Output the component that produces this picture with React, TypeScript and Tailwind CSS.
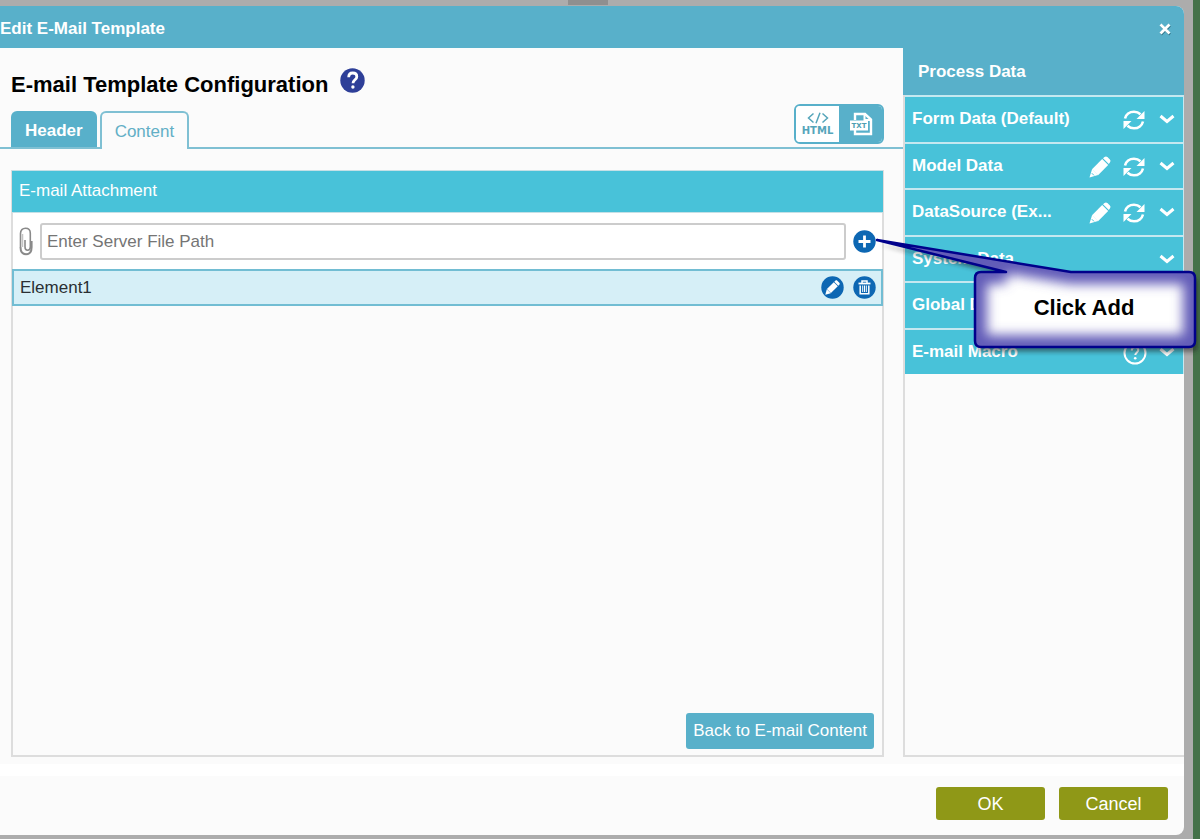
import React from 'react';

type IconProps = { className?: string };

const RefreshIcon = ({ className }: IconProps) => (
  <svg viewBox="0 0 22 20" width="22" height="20" className={className} aria-hidden="true">
    <path d="M2 8.5C3 4.5 6.500 1.700 11 1.700c2.600 0 4.800 1 6.500 2.600" fill="none" stroke="currentColor" strokeWidth="2.600" />
    <path d="M20 11.500c-1 4-4.500 6.800-9 6.800-2.600 0-4.800-1-6.500-2.600" fill="none" stroke="currentColor" strokeWidth="2.600" />
    <path d="M21.500 1v8h-8z" fill="currentColor" />
    <path d="M.5 19v-8h8z" fill="currentColor" />
  </svg>
);

const PencilIcon = ({ className }: IconProps) => (
  <svg viewBox="0 0 22 22" width="22" height="22" className={className} aria-hidden="true">
    <path d="M.5 21.500l2.600-8.500 6 6z" fill="currentColor" />
    <path d="M3 13.200L13.200 3l6 6L9 19.200z" fill="currentColor" />
    <path d="M14 2.200L15.500 1c1-.8 2-.7 2.900.1l2.500 2.500c.8.900.8 1.900 0 2.800l-1.100 1.600z" fill="currentColor" />
    <path d="M2.800 17.200l2.200 2.200" stroke="#48c2d9" strokeWidth="1" />
  </svg>
);

const ChevronIcon = () => (
  <svg viewBox="0 0 16 10" width="16" height="10" aria-hidden="true">
    <path d="M1.500 2L8 7.500 14.500 2" fill="none" stroke="currentColor" strokeWidth="3" />
  </svg>
);

const MacroHelpIcon = () => (
  <svg viewBox="0 0 24 24" width="24" height="24" aria-hidden="true">
    <circle cx="12" cy="12" r="10.500" fill="none" stroke="currentColor" strokeWidth="2" />
    <path d="M8.800 9.500c0-2 1.400-3.200 3.300-3.200s3.200 1.100 3.200 2.800c0 2.300-3 2.600-3 5" fill="none" stroke="currentColor" strokeWidth="2" />
    <circle cx="12.200" cy="17.300" r="1.300" fill="currentColor" />
  </svg>
);

const HelpIcon = () => (
  <svg viewBox="0 0 25 25" width="25" height="25" aria-hidden="true">
    <circle cx="12.500" cy="12.500" r="12.200" fill="#2e3f98" />
    <path d="M8.700 9.200c0-2.600 1.600-4.200 4-4.200s4.100 1.400 4.100 3.700c0 3-3.800 3.300-3.800 6.600" fill="none" stroke="#fff" strokeWidth="2.800" />
    <circle cx="12.900" cy="19" r="1.700" fill="#fff" />
  </svg>
);

const ClipIcon = () => (
  <svg viewBox="0 0 14 29" width="14" height="29" fill="none" aria-hidden="true">
    <path
      d="M1.500 20V6.500C1.500 3 3.500 1.300 6.500 1.300s4.800 1.900 4.800 5V20c0 2-1 3.200-2.700 3.200S6 22 6 20V13"
      stroke="#8a8a8a"
      strokeWidth="1.600"
    />
    <path d="M1.500 20c0 4.500 2 7.200 5.500 7.200s5.600-2.700 5.600-7V14" stroke="#8a8a8a" strokeWidth="2" />
    <path d="M3.500 20V7" stroke="#c4c4c4" strokeWidth="1.500" />
  </svg>
);

const AddIcon = () => (
  <svg viewBox="0 0 23 23" width="23" height="23" aria-hidden="true">
    <circle cx="11.500" cy="11.500" r="11.200" fill="#0d67b3" />
    <path d="M11.500 5.500v12M5.500 11.500h12" stroke="#fff" strokeWidth="2.800" />
  </svg>
);

const EditIcon = () => (
  <svg viewBox="0 0 23 23" width="23" height="23" aria-hidden="true">
    <circle cx="11.500" cy="11.500" r="11.200" fill="#0d67b3" />
    <path d="M4.300 18.700l1.500-5.500 4 4z" fill="#fff" />
    <path d="M5.900 13.100l6.900-6.900 4 4-6.900 6.900z" fill="#fff" />
    <path d="M13.300 5.700l1-1c.7-.6 1.400-.6 2 0l2 2c.6.600.6 1.300 0 2l-1 1z" fill="#fff" />
  </svg>
);

const TrashIcon = () => (
  <svg viewBox="0 0 23 23" width="23" height="23" fill="none" stroke="#fff" aria-hidden="true">
    <circle cx="11.500" cy="11.500" r="11.200" fill="#0d67b3" stroke="none" />
    <path d="M5.500 7.500h12" strokeWidth="1.800" />
    <path d="M9 7V5h5v2" strokeWidth="1.500" />
    <path d="M7.200 9.500v8.300h8.600V9.500" strokeWidth="1.500" />
    <path d="M9.700 9.500v6.500M11.500 9.500v6.500M13.300 9.500v6.500" strokeWidth="1" />
  </svg>
);

const CodeIcon = () => (
  <svg viewBox="0 0 22 12" width="22" height="12" fill="none" stroke="currentColor" strokeWidth="1.500" aria-hidden="true">
    <path d="M6.500 1.500L1.500 6l5 4.500M15.500 1.500l5 4.500-5 4.500M13 .8L9 11.200" />
  </svg>
);

const TxtIcon = () => (
  <svg viewBox="0 0 24 24" width="24" height="24" aria-hidden="true">
    <path d="M6 8V2h10l6 5.500V22H6v-4" fill="none" stroke="#fff" strokeWidth="2.400" />
    <path d="M15.500 1.500v6.500h6.500" fill="none" stroke="#fff" strokeWidth="2" />
    <rect x="1" y="8.500" width="18" height="10" fill="#fff" />
    <text x="10" y="16.200" textAnchor="middle" fontSize="7" className="fill-[#4f9fb3] font-['DejaVu_Sans',sans-serif] font-bold">
      TXT
    </text>
  </svg>
);

const sections = [
  { name: 'Form Data (Default)', refresh: true },
  { name: 'Model Data', edit: true, refresh: true },
  { name: 'DataSource (Ex...', edit: true, refresh: true },
  { name: 'System Data' },
  { name: 'Global Data' },
  { name: 'E-mail Macro', help: true },
];

const Sidebar = () => {
  return (
    <aside className="flex w-[281px] shrink-0 flex-col pb-[7px]">
      <h2 className="h-[47px] bg-[#58b0ca] px-[15px] pt-[13px] font-bold text-white">Process Data</h2>
      <div className="flex flex-1 flex-col border-b-2 border-l-2 border-[#ddd]">
        <ul className="grid min-h-[279px] auto-rows-fr border-r border-[#c5e8f0] text-white">
          {sections.map((s) => (
            <li key={s.name} className="flex items-center border-t-2 border-[#c5e8f0] bg-[#48c2d9] pt-[2px] pr-2 pl-[7px]">
              <span className="flex-1 pb-[2px] font-bold">{s.name}</span>
              {s.edit && (
                <button type="button" aria-label={`Edit ${s.name}`} className="mr-3">
                  <PencilIcon />
                </button>
              )}
              {s.refresh && (
                <button type="button" aria-label={`Refresh ${s.name}`} className="mr-[14px]">
                  <RefreshIcon />
                </button>
              )}
              {s.help && (
                <button type="button" aria-label="Macro help" className="mr-3">
                  <MacroHelpIcon />
                </button>
              )}
              <button type="button" aria-label={`Expand ${s.name}`} className="pb-[2px]">
                <ChevronIcon />
              </button>
            </li>
          ))}
        </ul>
      </div>
    </aside>
  );
};

const Tabs = () => {
  return (
    <div className="flex h-[45px] items-end border-b-2 border-[#7fc0d3] pl-[11px]">
      <div role="tablist" className="flex items-end gap-[3px]">
        <button type="button" role="tab" aria-selected="false" className="h-9 rounded-t-md bg-[#58b0ca] px-[14px] pt-[3px] font-bold text-white">
          Header
        </button>
        <button
          type="button"
          role="tab"
          aria-selected="true"
          className="-mb-[2px] h-[38px] rounded-t-md border-2 border-b-0 border-[#7fc0d3] bg-[#fbfbfb] px-[13px] pt-[2px] text-[#62afc6]"
        >
          Content
        </button>
      </div>
      <div className="mr-[19px] mb-[3px] ml-auto flex h-10 w-[90px] overflow-hidden rounded-md border-2 border-[#58b0ca]">
        <button type="button" className="flex flex-1 flex-col items-center justify-center gap-[2px] bg-white text-[#55a5ba]">
          <CodeIcon />
          <span className="font-['DejaVu_Sans',sans-serif] text-[10px] leading-[10px] font-bold">HTML</span>
        </button>
        <button type="button" aria-label="Plain text" className="flex flex-1 items-center justify-center bg-[#58b0ca]">
          <TxtIcon />
        </button>
      </div>
    </div>
  );
};

const Attachments = () => {
  return (
    <section className="mt-[21px] mr-[19px] mb-[7px] ml-[11px] flex flex-1 flex-col border-2 border-t-0 border-[#ddd]">
      <h2 className="-mx-px h-[43px] border-y border-[#c5e0e6] bg-[#48c2d9] px-[7px] pt-[9px] text-white">E-mail Attachment</h2>
      <div className="flex h-14 items-center bg-white px-[6px]">
        <ClipIcon />
        <input
          type="text"
          aria-label="Server file path"
          placeholder="Enter Server File Path"
          className="mx-[7px] h-[37px] min-w-0 flex-1 rounded-[3px] border-2 border-[#ccc] bg-white px-[5px] pt-[2px] placeholder:text-[#757575]"
        />
        <button type="button" aria-label="Add">
          <AddIcon />
        </button>
      </div>
      <div className="-mx-px flex h-[37px] items-center border-2 border-[#72bdd3] bg-[#d6eff7] pr-[5px] pl-[6px] text-[#2b2f33]">
        <span className="flex-1">Element1</span>
        <button type="button" aria-label="Edit Element1" className="mr-[9px]">
          <EditIcon />
        </button>
        <button type="button" aria-label="Delete Element1">
          <TrashIcon />
        </button>
      </div>
      <div className="mt-auto flex justify-end px-2 pb-[6px]">
        <button type="button" className="h-9 rounded-[3px] bg-[#58b0ca] px-[7px] text-white">
          Back to E-mail Content
        </button>
      </div>
    </section>
  );
};

const calloutShape =
  'M7 10L201 42H319Q325 42 325 48V111Q325 117 319 117H111Q105 117 105 111V48Q105 42 111 42H136Z';

const Callout = () => {
  return (
    <div className="pointer-events-none absolute top-[230px] right-0 h-[136px] w-[330px]">
      <svg viewBox="0 0 330 136" width="330" height="136" aria-hidden="true">
        <defs>
          <clipPath id="callout-clip">
            <path d={calloutShape} />
          </clipPath>
          <filter id="callout-glow" x="-10%" y="-10%" width="120%" height="120%">
            <feGaussianBlur stdDeviation="6" />
          </filter>
          <filter id="callout-shadow" x="-10%" y="-10%" width="120%" height="130%">
            <feGaussianBlur stdDeviation="2" />
          </filter>
        </defs>
        <path d={calloutShape} transform="translate(3 5)" fill="#222" opacity="0.5" filter="url(#callout-shadow)" />
        <path d={calloutShape} fill="#fff" />
        <g clipPath="url(#callout-clip)">
          <path d={calloutShape} fill="none" stroke="#625bb8" strokeWidth="24" filter="url(#callout-glow)" />
        </g>
        <path d={calloutShape} fill="none" stroke="#00008b" strokeWidth="2.500" strokeLinejoin="round" />
      </svg>
      <p className="absolute top-16 right-[5px] w-[222px] text-center text-[22px] leading-7 font-bold text-black">Click Add</p>
    </div>
  );
};

const App = () => {
  return (
    <div className="relative flex min-h-screen overflow-hidden bg-[#acacac] font-['Liberation_Sans',Arial,sans-serif] text-[17px] leading-[22px]">
      <div className="absolute top-0 left-[568px] h-[5px] w-10 bg-[#8f8f8f]" />
      <div className="mt-[6px] mr-[9px] mb-1 flex flex-1 flex-col overflow-hidden rounded-r-lg bg-[#fbfbfb]">
        <header className="flex h-[42px] shrink-0 items-center justify-between bg-[#58b0ca] pr-3 text-white">
          <h1 className="pt-1 font-bold">Edit E-Mail Template</h1>
          <button type="button" aria-label="Close" className="pt-[3px]">
            <svg viewBox="0 0 14 14" width="14" height="14" aria-hidden="true">
              <path d="M3 3.500l9 9M12 3.500l-9 9" stroke="#2f7488" strokeWidth="2.500" />
              <path d="M2.500 2.500l9 9M11.500 2.500l-9 9" stroke="#fff" strokeWidth="2.800" />
            </svg>
          </button>
        </header>

        <div className="flex flex-1">
          <main className="flex min-w-0 flex-1 flex-col">
            <div className="flex h-14 items-end gap-3 pb-2 pl-[11px]">
              <h2 className="text-[22px] leading-[22px] font-bold text-black">E-mail Template Configuration</h2>
              <button type="button" aria-label="Help" className="mb-[3px]">
                <HelpIcon />
              </button>
            </div>
            <Tabs />
            <Attachments />
          </main>
          <Sidebar />
        </div>

        <footer className="flex h-[71px] shrink-0 justify-end gap-[14px] border-t-[12px] border-white px-4 pt-[11px] text-lg text-white">
          <button type="button" className="h-[33px] w-[109px] rounded-[3px] bg-[#8f9817]">
            OK
          </button>
          <button type="button" className="h-[33px] w-[109px] rounded-[3px] bg-[#8f9817]">
            Cancel
          </button>
        </footer>
      </div>
      <div className="w-[7px] bg-[#447149]" />
      <Callout />
    </div>
  );
};

export default App;
